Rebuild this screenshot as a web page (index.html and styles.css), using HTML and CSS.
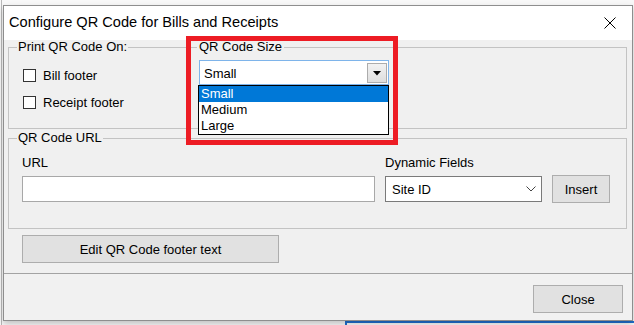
FILE: index.html
```html
<!DOCTYPE html>
<html lang="en">

<head>
    <meta charset="UTF-8">
    <meta name="viewport" content="width=device-width, initial-scale=1.0">
    <title>Configure QR Code for Bills and Receipts</title>
    <link rel="stylesheet" href="styles.css">
</head>

<body>
    <div class="backdrop-edge"></div>
    <div class="backdrop-window"></div>

    <div class="dialog">
        <div class="titlebar">
            <span class="title">Configure QR Code for Bills and Receipts</span>
            <button class="close-x" aria-label="Close">
                <svg width="12" height="12" viewBox="0 0 12 12">
                    <path d="M0.5 0.5 L11.5 11.5 M11.5 0.5 L0.5 11.5" stroke="#000" stroke-width="1" fill="none" />
                </svg>
            </button>
        </div>

        <div class="content">
            <fieldset class="group group-print">
                <legend>Print QR Code On:</legend>
                <div class="print-row">
                    <div class="checks">
                        <label class="check"><span class="box"></span>Bill footer</label>
                        <label class="check"><span class="box"></span>Receipt footer</label>
                    </div>

                    <fieldset class="size-group">
                        <legend>QR Code Size</legend>
                        <div class="combo">
                            <span class="combo-value">Small</span>
                            <span class="combo-btn">
                                <svg width="8" height="5" viewBox="0 0 8 5">
                                    <polygon points="0,0 8,0 4,4.5" fill="#000" />
                                </svg>
                            </span>
                        </div>
                        <ul class="combo-list">
                            <li class="selected">Small</li>
                            <li>Medium</li>
                            <li>Large</li>
                        </ul>
                    </fieldset>
                </div>
            </fieldset>

            <fieldset class="group group-url">
                <legend>QR Code URL</legend>
                <div class="url-row">
                    <div class="field">
                        <label class="field-label">URL</label>
                        <div class="textbox"></div>
                    </div>
                    <div class="field">
                        <label class="field-label">Dynamic Fields</label>
                        <div class="select">
                            <span class="select-value">Site ID</span>
                            <svg width="10" height="6" viewBox="0 0 10 6">
                                <polyline points="0.5,0.5 5,5 9.5,0.5" stroke="#444" stroke-width="1" fill="none" />
                            </svg>
                        </div>
                    </div>
                    <button class="btn btn-insert">Insert</button>
                </div>
            </fieldset>

            <button class="btn btn-edit">Edit QR Code footer text</button>
        </div>

        <div class="footer">
            <button class="btn btn-close">Close</button>
        </div>
    </div>

    <!-- annotation drawn over the screenshot -->
    <div class="highlight"></div>
</body>

</html>
```

FILE: styles.css
```css
* {
    box-sizing: border-box;
}

body {
    margin: 0;
    height: 325px;
    overflow: hidden;
    position: relative;
    background: #f8f8f8;
    font-family: 'Liberation Sans', Arial, sans-serif;
    font-size: 13px;
    color: #000;
}

/* bits of the windows behind the dialog */
.backdrop-edge {
    position: absolute;
    left: 0;
    top: 0;
    width: 2px;
    height: 325px;
    border-right: 1px solid #b8b8b8;
}

.backdrop-window {
    position: absolute;
    left: 345px;
    top: 321px;
    right: 0;
    height: 6px;
    border-top: 2px solid #1f6fcf;
    border-left: 2px solid #1f6fcf;
}

.dialog {
    position: relative;
    width: 630px;
    height: 316px;
    margin: 5px 0 0 3px;
    border: 1px solid #8e8e8e;
    background: #f0f0f0;
    display: flex;
    flex-direction: column;
    box-shadow: 0 3px 6px rgba(0, 0, 0, 0.22);
}

.titlebar {
    height: 34px;
    background: #fff;
    display: flex;
    align-items: center;
    padding-left: 5px;
}

.title {
    font-size: 14.6px;
    padding-bottom: 2px;
}

.close-x {
    margin-left: auto;
    width: 45px;
    height: 34px;
    border: none;
    background: transparent;
    padding: 0;
    display: flex;
    align-items: center;
    justify-content: center;
}

.content {
    padding: 0 5px 10px 4px;
}

fieldset {
    margin: 0;
    padding: 0;
    min-width: 0;
}

legend {
    line-height: 14px;
    margin-left: 8px;
    padding: 0 1px;
}

.group {
    border: 1px solid #c3c3c3;
}

.group-url {
    margin-top: 2px;
}

/* Print QR Code On */
.print-row {
    display: flex;
    align-items: flex-start;
}

.checks {
    width: 180px;
    padding: 14px 0 19px 14px;
    display: flex;
    flex-direction: column;
    gap: 13px;
}

.check {
    display: flex;
    align-items: center;
    gap: 7px;
    height: 14px;
}

.box {
    width: 13px;
    height: 13px;
    border: 1px solid #333;
    background: #fff;
}

/* QR Code Size */
.size-group {
    position: relative;
    border: none;
    width: 206px;
    margin-top: -14px;
}

.size-group legend {
    background: #f0f0f0;
    padding: 0 2px;
}

.combo {
    margin: 6px 0 0 10px;
    width: 190px;
    height: 25px;
    border: 1px solid #7eb4ea;
    background: #fff;
    display: flex;
    align-items: center;
    padding: 1px 1px 0 4px;
}

.combo-value {
    flex: 1;
}

.combo-btn {
    width: 20px;
    height: 20px;
    border: 1px solid #acacac;
    background: linear-gradient(#f2f2f2, #dedede);
    display: flex;
    align-items: center;
    justify-content: center;
}

.combo-list {
    position: absolute;
    left: 9px;
    top: 31px;
    width: 191px;
    margin: 0;
    padding: 0;
    list-style: none;
    border: 1px solid #000;
    background: #fff;
}

.combo-list li {
    height: 16px;
    line-height: 16px;
    padding-left: 2px;
}

.combo-list .selected {
    background: #0078d7;
    color: #fff;
}

/* QR Code URL */
.url-row {
    display: flex;
    align-items: flex-end;
    gap: 10px;
    padding: 11px 0 26px 13px;
}

.field {
    display: flex;
    flex-direction: column;
}

.field-label {
    line-height: 14px;
    margin-bottom: 6px;
}

.textbox {
    width: 353px;
    height: 26px;
    border: 1px solid #a8a8a8;
    background: #fff;
}

.select {
    width: 157px;
    height: 26px;
    border: 1px solid #7a7a7a;
    background: #fff;
    display: flex;
    align-items: center;
    padding: 0 5px 0 6px;
}

.select-value {
    flex: 1;
}

.btn {
    font-family: inherit;
    font-size: 13px;
    color: #000;
    background: #e1e1e1;
    border: 1px solid #adadad;
    padding: 0;
    height: 28px;
}

.btn-insert {
    width: 58px;
    margin-bottom: -1px;
}

.btn-edit {
    display: block;
    width: 257px;
    margin: 6px 0 0 14px;
}

.footer {
    flex: 1;
    border-top: 1px solid #a3a3a3;
    background: #f1f1f1;
    display: flex;
    justify-content: flex-end;
    align-items: flex-start;
    padding: 11px 9px 0 0;
}

.btn-close {
    width: 90px;
}

.highlight {
    position: absolute;
    left: 186px;
    top: 36px;
    width: 212px;
    height: 109px;
    border: 5px solid #ed1c24;
}
```
